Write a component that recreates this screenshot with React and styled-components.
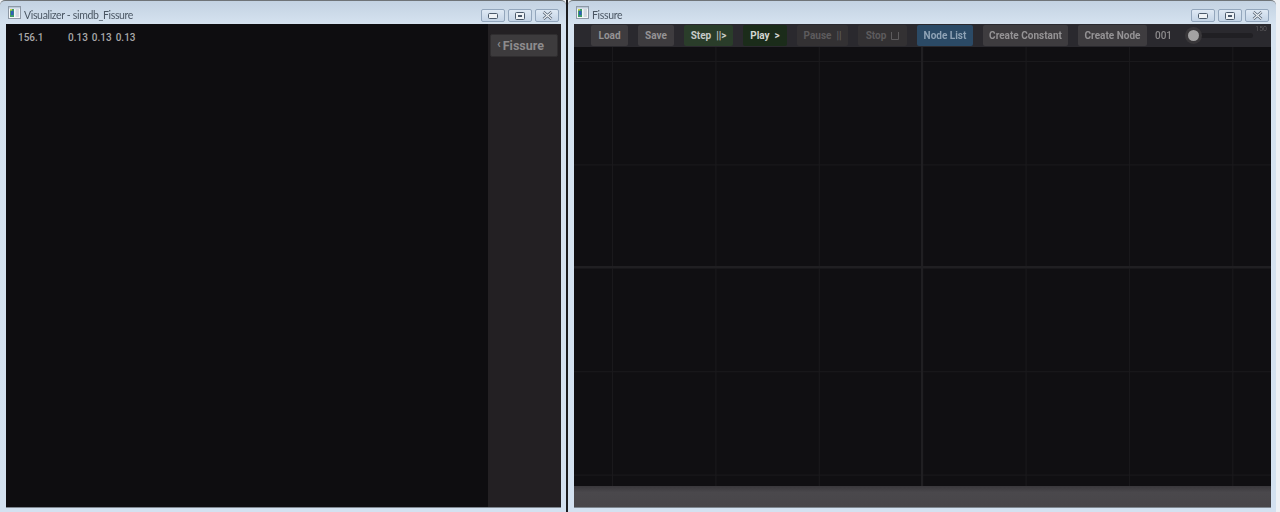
import React from "react";
import styled, { createGlobalStyle } from "styled-components";

const GlobalStyle = createGlobalStyle`
  html, body {
    margin: 0;
    padding: 0;
    background: #eef1f5;
  }
  body {
    width: 1280px;
    height: 512px;
    overflow: hidden;
  }
`;

function AppIcon() {
  return (
    <svg width="13" height="13" viewBox="0 0 13 13">
      <rect x="0.5" y="0.5" width="12" height="12" fill="#f4f6f8" stroke="#8e99a6" />
      <rect x="1" y="1" width="11" height="1.5" fill="#b9c8d8" />
      <rect x="2" y="3" width="4" height="8" fill="#3f9a68" />
      <rect x="3" y="5" width="2.5" height="4" fill="#2f5fb8" />
      <rect x="2" y="3" width="2" height="1.5" fill="#c9d14f" />
      <rect x="7.5" y="3" width="3.5" height="8" fill="#d3dae1" />
    </svg>
  );
}

function StopGlyph() {
  return (
    <svg width="8" height="8" viewBox="0 0 8 8">
      <path d="M0.5 0 V7.5 H7.5 V0" fill="none" stroke="currentColor" />
    </svg>
  );
}

function WindowControls() {
  return (
    <Controls>
      <ControlButton>
        <svg width="10" height="6" viewBox="0 0 10 6">
          <rect x="0.5" y="0.5" width="9" height="5" rx="1" fill="#eef2f6" stroke="#4b5a6b" />
        </svg>
      </ControlButton>
      <ControlButton>
        <svg width="10" height="8" viewBox="0 0 10 8">
          <rect x="0.5" y="0.5" width="9" height="7" rx="1" fill="#eef2f6" stroke="#4b5a6b" />
          <rect x="3" y="3" width="4" height="2" fill="#4b5a6b" />
        </svg>
      </ControlButton>
      <ControlButton>
        <svg width="11" height="9" viewBox="0 0 11 9">
          <path d="M1.5 1 L9.5 8 M9.5 1 L1.5 8" stroke="#4b5a6b" strokeWidth="2.6" />
          <path d="M1.5 1 L9.5 8 M9.5 1 L1.5 8" stroke="#eef2f6" strokeWidth="1.2" />
        </svg>
      </ControlButton>
    </Controls>
  );
}

function App() {
  return (
    <>
      <GlobalStyle />
      <Desktop>
        <Window $width="566px">
          <TitleBar>
            <AppIcon />
            <TitleText>Visualizer - simdb_Fissure</TitleText>
            <WindowControls />
          </TitleBar>
          <ClientRow>
            <Client>
              <Viewport>
                <Readout>
                  <ReadoutTime>156.1</ReadoutTime>
                  <span>0.13</span>
                  <span>0.13</span>
                  <span>0.13</span>
                </Readout>
              </Viewport>
              <SidePanel>
                <PanelButton>
                  <Chevron>‹</Chevron>Fissure
                </PanelButton>
              </SidePanel>
            </Client>
          </ClientRow>
        </Window>
        <Divider />
        <Window $width="708px">
          <TitleBar>
            <AppIcon />
            <TitleText>Fissure</TitleText>
            <WindowControls />
          </TitleBar>
          <ClientRow>
            <Client $column>
              <Toolbar>
                <ToolButton $width="37px">Load</ToolButton>
                <ToolButton $width="36px">Save</ToolButton>
                <ToolButton $width="49px" $variant="step">
                  Step&nbsp;&nbsp;||&gt;
                </ToolButton>
                <ToolButton $width="44px" $variant="play">
                  Play&nbsp;&nbsp;&gt;
                </ToolButton>
                <ToolButton $width="51px" $variant="disabled">
                  Pause&nbsp;&nbsp;||
                </ToolButton>
                <ToolButton $width="49px" $variant="disabled">
                  Stop&nbsp;&nbsp;
                  <StopGlyph />
                </ToolButton>
                <ToolButton $width="56px" $variant="active">
                  Node List
                </ToolButton>
                <ToolButton $width="85px">Create Constant</ToolButton>
                <ToolButton $width="69px">Create Node</ToolButton>
                <Counter>001</Counter>
                <Slider>
                  <SliderMax>150</SliderMax>
                  <SliderKnob />
                </Slider>
              </Toolbar>
              <Canvas />
              <StatusBar />
            </Client>
          </ClientRow>
        </Window>
      </Desktop>
    </>
  );
}

const Desktop = styled.div`
  display: flex;
  align-items: stretch;
  width: 1280px;
  height: 512px;
  font-family: "Roboto", "Liberation Sans", sans-serif;
  filter: blur(0.35px);
`;

const Window = styled.div`
  display: flex;
  flex-direction: column;
  width: ${(p) => p.$width};
  height: 512px;
  background: linear-gradient(180deg, #c3d2e2 0, #d6e3f0 24px, #d3e1f0 100%);
  border-top: 1px solid #6f7478;
  border-radius: 5px 5px 0 0;
  box-sizing: border-box;
`;

const Divider = styled.div`
  width: 2px;
  background: #1b1c1f;
`;

const TitleBar = styled.div`
  display: flex;
  align-items: center;
  height: 23px;
  padding: 0 7px 0 8px;
  gap: 3px;
  flex: none;
`;

const TitleText = styled.span`
  flex: 1;
  font-family: "Lato", "Liberation Sans", sans-serif;
  font-size: 10.5px;
  letter-spacing: -0.35px;
  color: #4a5663;
  padding-top: 4px;
`;

const Controls = styled.div`
  display: flex;
  gap: 3px;
  align-self: flex-start;
  margin-top: 8px;
`;

const ControlButton = styled.div`
  display: flex;
  align-items: center;
  justify-content: center;
  width: 24px;
  height: 13px;
  box-sizing: border-box;
  border: 1px solid #93a6bc;
  border-radius: 2px;
  background: linear-gradient(180deg, #dfe9f4, #c4d4e6);
`;

const ClientRow = styled.div`
  flex: 1;
  display: flex;
  padding: 0 5px 5px 6px;
  min-height: 0;
`;

const Client = styled.div`
  flex: 1;
  display: flex;
  flex-direction: ${(p) => (p.$column ? "column" : "row")};
  background: #0e0d10;
  min-width: 0;
  box-shadow: 0 1px 0 #7f8790;
`;

const Viewport = styled.div`
  flex: 1;
  padding: 8px 12px;
  background: #0e0d10;
`;

const Readout = styled.div`
  display: flex;
  gap: 4px;
  font-size: 10px;
  font-weight: 500;
  color: #a9a8a9;
  line-height: 12px;
`;

const ReadoutTime = styled.span`
  width: 46px;
`;

const SidePanel = styled.div`
  width: 73px;
  flex: none;
  padding: 10px 3px 0 2px;
  box-sizing: border-box;
  background: #232023;
`;

const PanelButton = styled.div`
  display: flex;
  align-items: center;
  height: 23px;
  padding-left: 6px;
  box-sizing: border-box;
  background: #3d3b3d;
  border: 1px solid #2f2d2f;
  border-radius: 2px;
  font-size: 12.5px;
  font-weight: 700;
  color: #8d8b8d;
`;

const Chevron = styled.span`
  font-size: 12px;
  margin-right: 2px;
  position: relative;
  top: -2px;
`;

const Toolbar = styled.div`
  display: flex;
  align-items: center;
  gap: 10px;
  height: 23px;
  padding-left: 17px;
  flex: none;
  background: #2a292e;
`;

const variants = {
  normal: { bg: "#3e3c3f", color: "#959395" },
  step: { bg: "#2a3d2a", color: "#c6cac6" },
  play: { bg: "#1b2c1a", color: "#d2d6d2" },
  disabled: { bg: "#333133", color: "#5d5b5d" },
  active: { bg: "#2b4a66", color: "#8fa3b6" },
};

const ToolButton = styled.div`
  display: flex;
  align-items: center;
  justify-content: center;
  width: ${(p) => p.$width};
  height: 21px;
  flex: none;
  border-radius: 2px;
  background: ${(p) => variants[p.$variant || "normal"].bg};
  color: ${(p) => variants[p.$variant || "normal"].color};
  font-size: 10px;
  font-weight: 700;
  white-space: nowrap;
`;

const Counter = styled.span`
  margin-left: -2px;
  font-size: 10px;
  font-weight: 500;
  color: #8c8a8c;
`;

const Slider = styled.div`
  position: relative;
  width: 59px;
  height: 5px;
  margin-left: 12px;
  background: #201f23;
  border-radius: 3px;
`;

const SliderKnob = styled.div`
  position: absolute;
  left: -6px;
  top: -3px;
  width: 11px;
  height: 11px;
  border-radius: 50%;
  background: #a3a2a3;
  box-shadow: 0 0 0 3px #39373a;
`;

const SliderMax = styled.span`
  position: absolute;
  right: -14px;
  top: -8px;
  font-size: 7px;
  line-height: 8px;
  color: #5a585b;
`;

const Canvas = styled.div`
  flex: 1;
  background-color: #100f12;
  background-image:
    linear-gradient(90deg, #201f22 2px, transparent 2px),
    linear-gradient(180deg, #201f22 2px, transparent 2px),
    linear-gradient(90deg, #1a191c 1px, transparent 1px),
    linear-gradient(180deg, #1a191c 1px, transparent 1px);
  background-size: 100% 100%, 100% 100%, 103.4px 100%, 100% 103.4px;
  background-position: 347px 0, 0 219px, 38px 0, 0 14px;
  background-repeat: no-repeat, no-repeat, repeat, repeat;
`;

const StatusBar = styled.div`
  height: 21px;
  flex: none;
  background: linear-gradient(180deg, #3a383c, #4a484c 30%, #484649);
`;

export default App;
